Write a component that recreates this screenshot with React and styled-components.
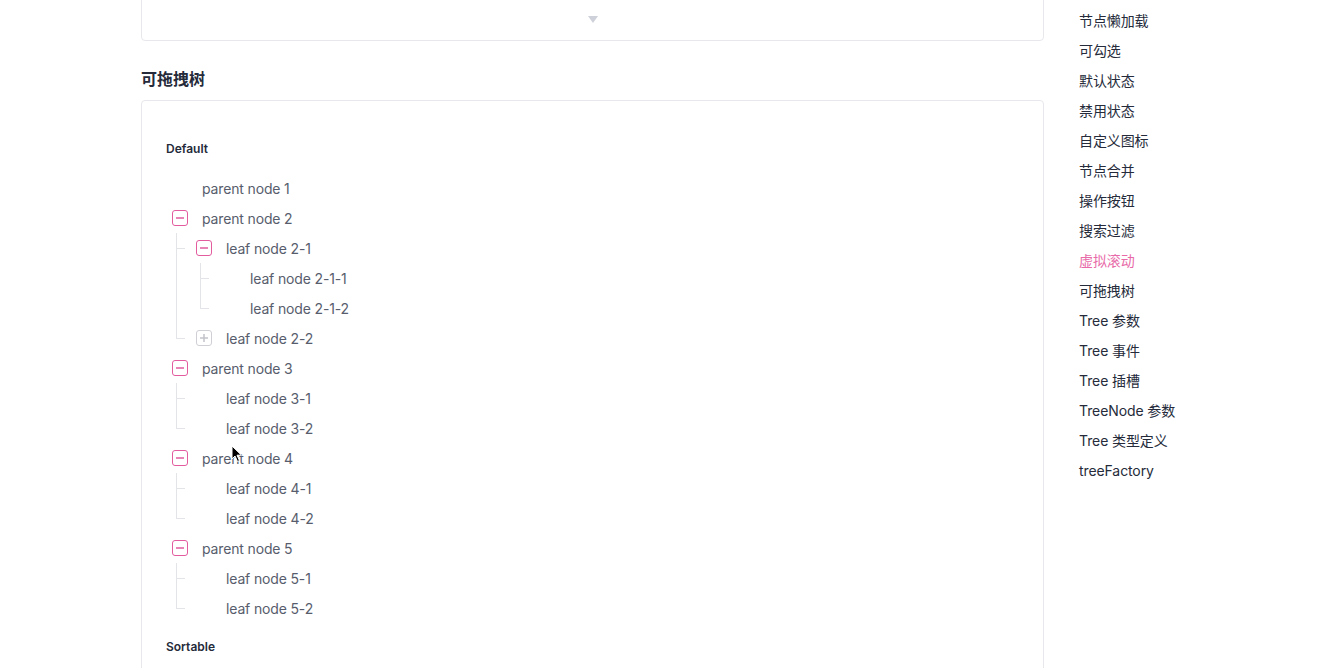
import React from "react";
import styled, { createGlobalStyle } from "styled-components";

const GlobalStyle = createGlobalStyle`
  html, body {
    margin: 0;
    padding: 0;
    background: #ffffff;
    overflow: hidden;
  }
  body {
    font-family: Inter, "Noto Sans CJK SC", sans-serif;
    color: #252b3a;
  }
`;

const Page = styled.div`
  position: relative;
  display: flex;
  align-items: flex-start;
  width: 1336px;
  height: 668px;
  overflow: hidden;
  padding-left: 141px;
  box-sizing: border-box;
`;

const Main = styled.div`
  width: 903px;
  flex-shrink: 0;
`;

const Card = styled.div`
  border: 1px solid #e8e8ec;
  border-radius: 4px;
  background: #fff;
  box-sizing: border-box;
`;

const ScrolledCard = styled(Card)`
  height: 90px;
  margin-top: -49px;
  display: flex;
  align-items: flex-end;
  justify-content: center;
  padding-bottom: 17px;
`;

const Caret = styled.div`
  width: 0;
  height: 0;
  border-left: 5px solid transparent;
  border-right: 5px solid transparent;
  border-top: 7px solid #cfd1da;
`;

const SectionTitle = styled.h3`
  margin: 27px 0 10px;
  font-size: 16px;
  line-height: 22px;
  font-weight: 600;
  color: #252b3a;
`;

const DemoCard = styled(Card)`
  padding: 38px 24px 0;
  min-height: 600px;
`;

const DemoLabel = styled.h4`
  margin: ${p => (p.$first ? "0" : "14px")} 0 14px;
  font-size: 12px;
  line-height: 20px;
  font-weight: 600;
  color: #252b3a;
`;

const TreeList = styled.ul`
  list-style: none;
  margin: 0;
  padding: 0;
`;

const Branch = styled.li`
  position: relative;

  ${p =>
    p.$level > 0 &&
    `
    &::before {
      content: "";
      position: absolute;
      left: ${10 + (p.$level - 1) * 24}px;
      top: 0;
      ${p.$last ? "height: 15px;" : "bottom: 0;"}
      border-left: 1px solid #e3e4e8;
    }
    &::after {
      content: "";
      position: absolute;
      left: ${10 + (p.$level - 1) * 24}px;
      top: 15px;
      width: 9px;
      border-top: 1px solid #e3e4e8;
    }
  `}
`;

const Row = styled.div`
  display: flex;
  align-items: center;
  height: 30px;
  padding-left: ${p => 6 + p.$level * 24}px;
`;

const Toggle = styled.span`
  width: 16px;
  height: 16px;
  margin-right: 14px;
  flex-shrink: 0;
  display: flex;
  align-items: center;
  justify-content: center;
  box-sizing: border-box;
  border-radius: 3px;
  border: ${p => (p.$kind ? `1px solid ${p.$kind === "open" ? "#e25c9e" : "#cfd0d6"}` : "none")};
  color: ${p => (p.$kind === "open" ? "#e25c9e" : "#c2c3ca")};
`;

const Label = styled.span`
  font-size: 14px;
  letter-spacing: -0.15px;
  color: #575d6c;
  white-space: nowrap;
`;

const Side = styled.nav`
  margin-left: 35px;
  padding-top: 6px;
  display: flex;
  flex-direction: column;
`;

const SideLink = styled.a`
  font-size: 14px;
  line-height: 30px;
  letter-spacing: -0.1px;
  color: ${p => (p.$active ? "#e86aa8" : "#252b3a")};
  white-space: nowrap;
  text-decoration: none;
`;

const Pointer = styled.svg`
  position: absolute;
  left: 231px;
  top: 445px;
  pointer-events: none;
`;

const tree = [
  { label: "parent node 1" },
  {
    label: "parent node 2",
    open: true,
    children: [
      {
        label: "leaf node 2-1",
        open: true,
        children: [{ label: "leaf node 2-1-1" }, { label: "leaf node 2-1-2" }]
      },
      { label: "leaf node 2-2", open: false, children: [{ label: "leaf node 2-2-1" }] }
    ]
  },
  { label: "parent node 3", open: true, children: [{ label: "leaf node 3-1" }, { label: "leaf node 3-2" }] },
  { label: "parent node 4", open: true, children: [{ label: "leaf node 4-1" }, { label: "leaf node 4-2" }] },
  { label: "parent node 5", open: true, children: [{ label: "leaf node 5-1" }, { label: "leaf node 5-2" }] }
];

const links = [
  "节点懒加载",
  "可勾选",
  "默认状态",
  "禁用状态",
  "自定义图标",
  "节点合并",
  "操作按钮",
  "搜索过滤",
  "虚拟滚动",
  "可拖拽树",
  "Tree 参数",
  "Tree 事件",
  "Tree 插槽",
  "TreeNode 参数",
  "Tree 类型定义",
  "treeFactory"
];

const ToggleIcon = ({ open }) => (
  <svg width="10" height="10" viewBox="0 0 10 10">
    <rect x="1" y="4.25" width="8" height="1.5" fill="currentColor" />
    {!open && <rect x="4.25" y="1" width="1.5" height="8" fill="currentColor" />}
  </svg>
);

const TreeNode = ({ node, level, last }) => {
  const hasChildren = !!node.children;
  return (
    <Branch $level={level} $last={last}>
      <Row $level={level}>
        <Toggle $kind={hasChildren ? (node.open ? "open" : "closed") : null}>
          {hasChildren && <ToggleIcon open={node.open} />}
        </Toggle>
        <Label>{node.label}</Label>
      </Row>
      {hasChildren && node.open && (
        <TreeList>
          {node.children.map((c, i) => (
            <TreeNode key={c.label} node={c} level={level + 1} last={i === node.children.length - 1} />
          ))}
        </TreeList>
      )}
    </Branch>
  );
};

export default function App() {
  return (
    <>
      <GlobalStyle />
      <Page>
        <Main>
          <ScrolledCard>
            <Caret />
          </ScrolledCard>
          <SectionTitle>可拖拽树</SectionTitle>
          <DemoCard>
            <DemoLabel $first>Default</DemoLabel>
            <TreeList>
              {tree.map((n, i) => (
                <TreeNode key={n.label} node={n} level={0} last={i === tree.length - 1} />
              ))}
            </TreeList>
            <DemoLabel>Sortable</DemoLabel>
          </DemoCard>
        </Main>
        <Side>
          {links.map(l => (
            <SideLink key={l} $active={l === "虚拟滚动"}>
              {l}
            </SideLink>
          ))}
        </Side>
        <Pointer width="12" height="18" viewBox="0 0 12 18">
          <path d="M1 1 L1 14 L4 11 L6.5 16.5 L8.5 15.6 L6 10.2 L10.5 10.2 Z" fill="#000" stroke="#fff" strokeWidth="1" />
        </Pointer>
      </Page>
    </>
  );
}
